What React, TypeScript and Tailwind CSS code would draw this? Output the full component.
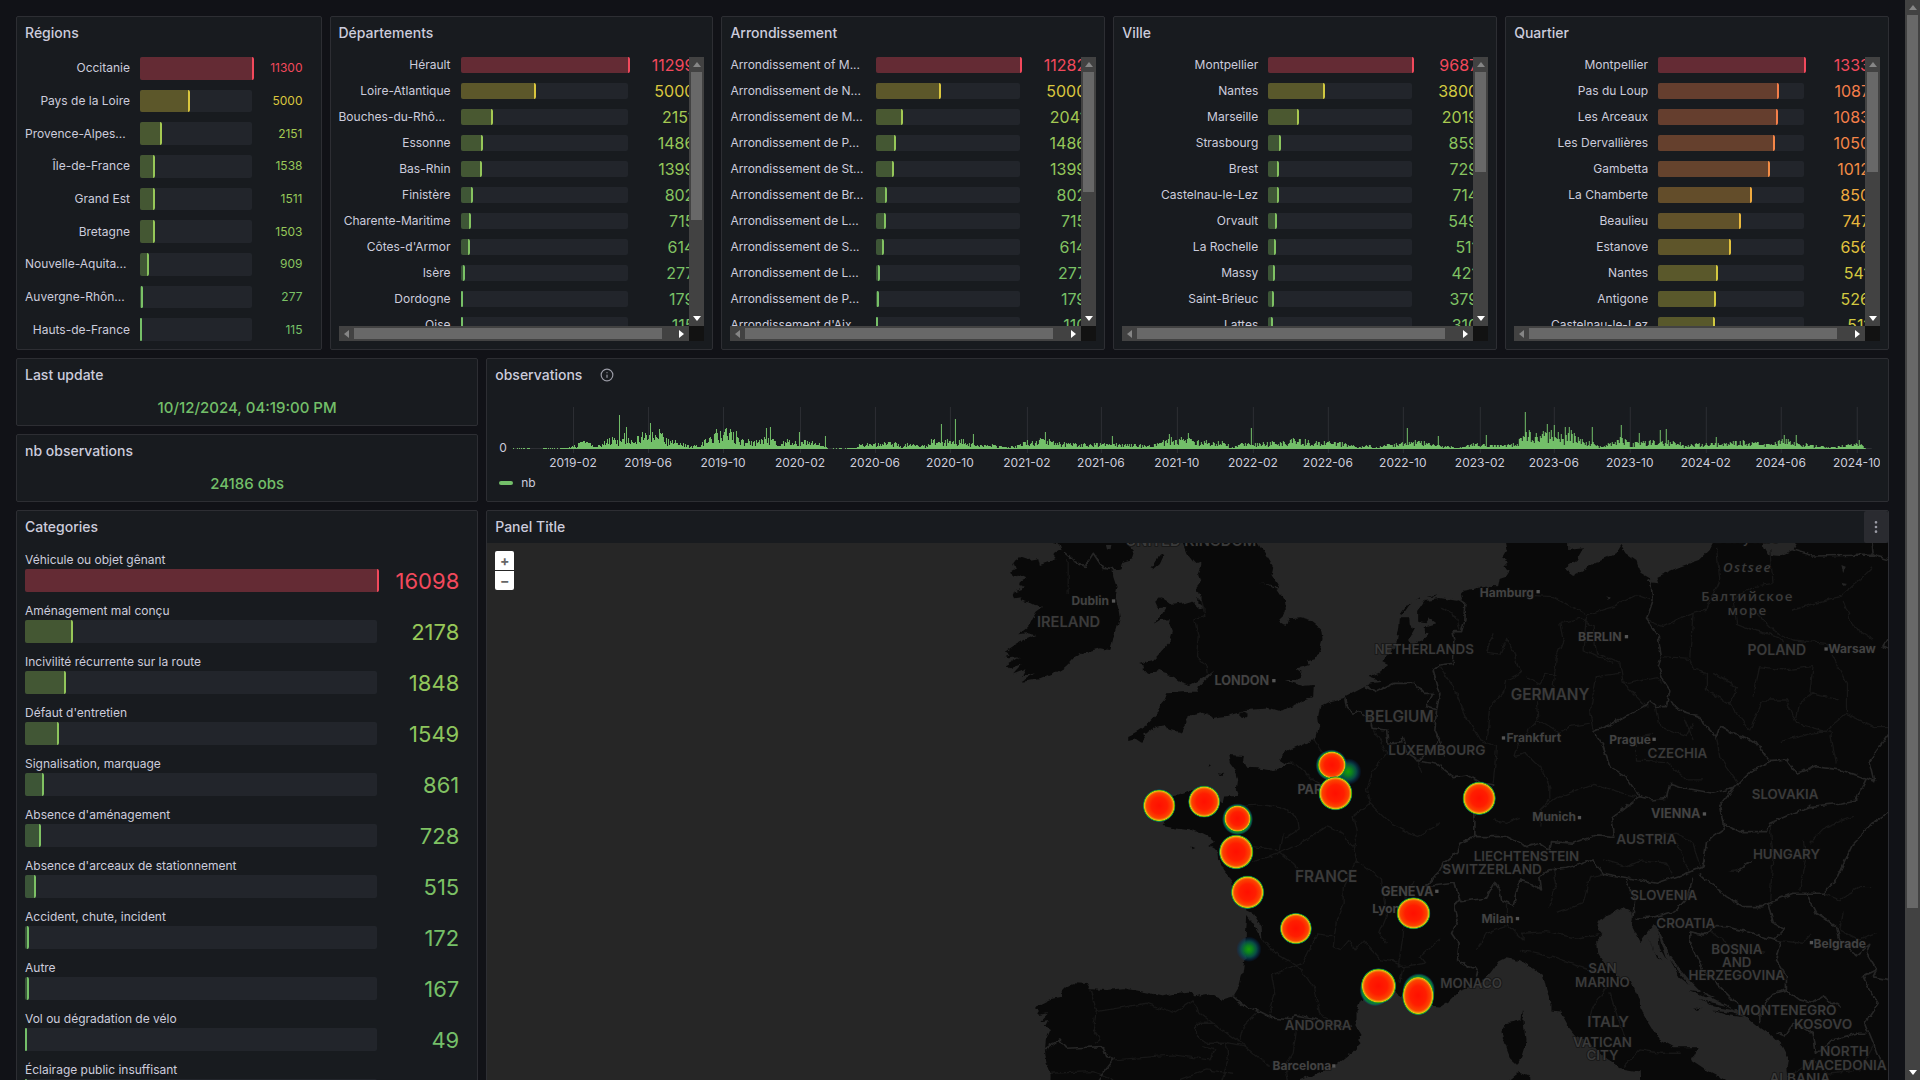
import { ReactNode } from "react";
import { EllipsisVertical, Info } from "lucide-react";

type Row = [label: string, value: number];
type RGB = [number, number, number];

const regions: Row[] = [
  ["Occitanie", 11300],
  ["Pays de la Loire", 5000],
  ["Provence-Alpes...", 2151],
  ["Île-de-France", 1538],
  ["Grand Est", 1511],
  ["Bretagne", 1503],
  ["Nouvelle-Aquita...", 909],
  ["Auvergne-Rhôn...", 277],
  ["Hauts-de-France", 115],
];

const departements: Row[] = [
  ["Hérault", 11299],
  ["Loire-Atlantique", 5000],
  ["Bouches-du-Rhô...", 2151],
  ["Essonne", 1486],
  ["Bas-Rhin", 1399],
  ["Finistère", 802],
  ["Charente-Maritime", 715],
  ["Côtes-d'Armor", 614],
  ["Isère", 277],
  ["Dordogne", 179],
  ["Oise", 115],
];

const arrondissements: Row[] = [
  ["Arrondissement of M...", 11282],
  ["Arrondissement de N...", 5000],
  ["Arrondissement de M...", 2041],
  ["Arrondissement de P...", 1486],
  ["Arrondissement de St...", 1399],
  ["Arrondissement de Br...", 802],
  ["Arrondissement de L...", 715],
  ["Arrondissement de S...", 614],
  ["Arrondissement de L...", 277],
  ["Arrondissement de P...", 179],
  ["Arrondissement d'Aix...", 110],
];

const villes: Row[] = [
  ["Montpellier", 9687],
  ["Nantes", 3800],
  ["Marseille", 2019],
  ["Strasbourg", 859],
  ["Brest", 729],
  ["Castelnau-le-Lez", 714],
  ["Orvault", 549],
  ["La Rochelle", 511],
  ["Massy", 421],
  ["Saint-Brieuc", 379],
  ["Lattes", 310],
];

const quartiers: Row[] = [
  ["Montpellier", 1333],
  ["Pas du Loup", 1087],
  ["Les Arceaux", 1083],
  ["Les Dervallières", 1050],
  ["Gambetta", 1012],
  ["La Chamberte", 850],
  ["Beaulieu", 747],
  ["Estanove", 656],
  ["Nantes", 541],
  ["Antigone", 526],
  ["Castelnau-le-Lez", 511],
];

const categories: Row[] = [
  ["Véhicule ou objet gênant", 16098],
  ["Aménagement mal conçu", 2178],
  ["Incivilité récurrente sur la route", 1848],
  ["Défaut d'entretien", 1549],
  ["Signalisation, marquage", 861],
  ["Absence d'aménagement", 728],
  ["Absence d'arceaux de stationnement", 515],
  ["Accident, chute, incident", 172],
  ["Autre", 167],
  ["Vol ou dégradation de vélo", 49],
  ["Éclairage public insuffisant", 20],
];

/* Green - yellow - red scale, interpolated with a uniform B-spline. */
const stops: RGB[] = [
  [115, 191, 105],
  [250, 222, 42],
  [242, 73, 92],
];
const panelRgb: RGB = [24, 27, 31];

function scale(t: number): RGB {
  const n = stops.length - 1;
  const i = Math.min(Math.floor(t * n), n - 1);
  const u = t * n - i;
  return [0, 1, 2].map((c) => {
    const b = stops[i][c];
    const d = stops[i + 1][c];
    const a = i > 0 ? stops[i - 1][c] : 2 * b - d;
    const e = i < n - 1 ? stops[i + 2][c] : 2 * d - b;
    const u2 = u * u;
    const u3 = u2 * u;
    return Math.round(
      ((1 - 3 * u + 3 * u2 - u3) * a + (4 - 6 * u2 + 3 * u3) * b + (1 + 3 * u + 3 * u2 - 3 * u3) * d + u3 * e) / 6,
    );
  }) as RGB;
}
const css = (c: RGB) => `rgb(${c.join(",")})`;
const fade = (c: RGB) => css(c.map((v, i) => Math.round(v * 0.35 + panelRgb[i] * 0.65)) as RGB);

function Panel({ title, extra, className = "", children }: { title: string; extra?: ReactNode; className?: string; children: ReactNode }) {
  return (
    <section className={`flex min-w-0 flex-col rounded-xs border border-[#2d2e33] bg-[#181b1f] ${className}`}>
      <header className="flex h-8 shrink-0 items-center gap-[18px] pl-2">
        <h2 className="pb-px text-[14px] font-medium leading-5">{title}</h2>
        {extra}
      </header>
      {children}
    </section>
  );
}

function Bar({ t, className = "" }: { t: number; className?: string }) {
  const color = scale(t);
  return (
    <div className={`flex min-w-0 rounded-xs bg-[#22252b] ${className}`}>
      <div
        className="shrink-0 rounded-xs border-r-2"
        style={{ width: `calc((100% + 2px) * ${t})`, backgroundColor: fade(color), borderColor: css(color) }}
      />
    </div>
  );
}

function Label({ text, className = "" }: { text: string; className?: string }) {
  const cut = text.endsWith("...");
  return <div className={`shrink-0 whitespace-nowrap text-[12px] leading-4 ${cut ? "text-left" : "text-right"} ${className}`}>{text}</div>;
}

const DIRS = { up: "M4 0 8 5H0Z", down: "M0 0H8L4 5Z", left: "M0 4 5 0V8Z", right: "M5 4 0 0V8Z" };
function Arrow({ dir, dim }: { dir: keyof typeof DIRS; dim?: boolean }) {
  const vertical = dir === "up" || dir === "down";
  return (
    <span className="flex size-[15px] shrink-0 items-center justify-center">
      <svg
        className={`${vertical ? "h-[5px] w-2" : "h-2 w-[5px]"} ${dim ? "fill-[#868686]" : "fill-white"}`}
        viewBox={vertical ? "0 0 8 5" : "0 0 5 8"}
      >
        <path d={DIRS[dir]} />
      </svg>
    </span>
  );
}

function VScroll({ thumb }: { thumb: string }) {
  return (
    <div className="flex w-[15px] shrink-0 flex-col items-center bg-[#424242]">
      <Arrow dir="up" dim />
      <div className="flex w-[11px] flex-1 flex-col">
        <div className={`bg-[#686868] ${thumb}`} />
      </div>
      <Arrow dir="down" />
    </div>
  );
}

function ScrollGauge({ rows, labelWidth, thumb }: { rows: Row[]; labelWidth: string; thumb: string }) {
  const max = rows[0][1];
  return (
    <div className="m-2 flex h-[284px] flex-col">
      <div className="flex min-h-0 flex-1">
        <div className="min-w-0 flex-1 overflow-hidden">
          <div className="-mr-[15px] flex flex-col gap-[10px] pr-[10px]">
            {rows.map(([label, value], i) => (
              <div key={i} className="flex h-4 shrink-0 items-stretch">
                <Label text={label} className={`mr-[10px] ${labelWidth}`} />
                <Bar t={value / max} className="flex-1" />
                <div className="w-[66px] shrink-0 text-right text-[16px] leading-4" style={{ color: css(scale(value / max)) }}>
                  {value}
                </div>
              </div>
            ))}
          </div>
        </div>
        <VScroll thumb={thumb} />
      </div>
      <div className="flex h-[15px] shrink-0">
        <div className="flex flex-1 items-center bg-[#424242]">
          <Arrow dir="left" dim />
          <div className="h-[11px] flex-1">
            <div className="h-full w-[96%] bg-[#686868]" />
          </div>
          <Arrow dir="right" />
        </div>
        <div className="w-[15px] bg-[#121212]" />
      </div>
    </div>
  );
}

function Stat({ title, value }: { title: string; value: string }) {
  return (
    <Panel title={title}>
      <p className="flex h-[34px] items-center justify-center text-[15px] font-medium text-[#73bf69]">{value}</p>
    </Panel>
  );
}

/* ---------- time series ---------- */

const ENVELOPE: [number, number][] = [
  [18, 0], [65, 1], [81, 4], [86, 10], [93, 7], [102, 3], [109, 8], [116, 12], [123, 11], [127, 20], [131, 11], [141, 15], [150, 18], [165, 19], [173, 10],
  [187, 7], [194, 3], [203, 4], [210, 10], [221, 18], [233, 20], [242, 14], [251, 9], [260, 10], [270, 16], [279, 10], [283, 5], [290, 10],
  [302, 8], [311, 9], [325, 6], [332, 1], [333, 0], [352, 1], [361, 1], [364, 5], [380, 6], [389, 7], [403, 7], [406, 1], [410, 6], [426, 5], [430, 3],
  [435, 10], [449, 10], [458, 9], [465, 12], [472, 7], [483, 4], [499, 5], [508, 2], [522, 4], [531, 10], [550, 11], [559, 9], [573, 6],
  [596, 6], [619, 6], [637, 5], [655, 4], [664, 8], [674, 11], [692, 14], [705, 9], [710, 11], [714, 6], [726, 9], [733, 5], [736, 2], [744, 6],
  [769, 7], [790, 9], [804, 12], [815, 8], [834, 8], [852, 6], [863, 2], [873, 5], [879, 1], [889, 4], [907, 8], [916, 9], [930, 9], [939, 4],
  [957, 3], [963, 1], [976, 6], [990, 5], [999, 4], [1022, 7], [1031, 20], [1042, 15], [1058, 20], [1068, 14], [1077, 19], [1086, 10],
  [1095, 8], [1107, 2], [1125, 14], [1137, 6], [1148, 9], [1169, 9], [1185, 7], [1189, 3], [1201, 6], [1224, 6], [1242, 9], [1261, 8],
  [1274, 5], [1288, 11], [1302, 8], [1320, 4], [1334, 2], [1348, 4], [1364, 7], [1370, 1], [1371, 0], [1377, 0],
];
const SPIKES = new Map<number, number>([
  [124, 34], [131, 22], [155, 26], [164, 20], [221, 20], [231, 21], [235, 20], [241, 18], [271, 21], [275, 22], [304, 17], [330, 13], [446, 25],
  [460, 30], [478, 15], [550, 17], [617, 13], [674, 15], [693, 16], [756, 21], [912, 21], [943, 13], [991, 14], [1030, 37], [1052, 25], [1059, 24],
  [1070, 22], [1074, 22], [1097, 22], [1126, 24], [1144, 16], [1165, 19], [1171, 20], [1221, 12], [1289, 14], [1301, 14], [1364, 9],
]);
const BASE = 58;
const rand = (n: number) => {
  const s = Math.sin(n * 127.1 + 11.7) * 43758.5453;
  return s - Math.floor(s);
};
function columns() {
  let d = "";
  for (let x = 18; x < 1371; x++) {
    const k = ENVELOPE.findIndex((p) => p[0] > x);
    const [x0, y0] = ENVELOPE[k - 1];
    const [x1, y1] = ENVELOPE[k];
    const level = y0 + ((y1 - y0) * (x - x0)) / (x1 - x0);
    const r = rand(x);
    const h = SPIKES.get(x) ?? (level < 1 ? (r > 0.55 ? 1 : 0) : Math.max(1, Math.round(level * (0.3 + 0.75 * r))));
    if (h) d += `M${x} ${BASE}v-${h}h1v${h}z`;
  }
  return d;
}
const SERIES = columns();
const TICKS: [number, string][] = [
  [78, "2019-02"], [153, "2019-06"], [228, "2019-10"], [305, "2020-02"], [380, "2020-06"], [455, "2020-10"], [532, "2021-02"], [606, "2021-06"],
  [682, "2021-10"], [758, "2022-02"], [833, "2022-06"], [908, "2022-10"], [985, "2023-02"], [1059, "2023-06"], [1135, "2023-10"], [1211, "2024-02"],
  [1286, "2024-06"], [1362, "2024-10"],
];

function Observations() {
  return (
    <div className="flex flex-1 flex-col px-2">
      <svg viewBox="0 0 1385 80" className="block w-full shrink-0" role="img" aria-label="observations over time">
        {TICKS.map(([x]) => (
          <path key={x} d={`M${x} 16h1v46h-1z`} fill="#2d2f34" />
        ))}
        <path d="M18 57h1359v1H18z" fill="#2d2f34" />
        <path d={SERIES} fill="#73bf69" />
        <g fill="#ccccdc" fontSize="12" fontFamily="Inter, sans-serif" textAnchor="middle">
          <text x="8" y="61">0</text>
          {TICKS.map(([x, label]) => (
            <text key={x} x={x} y="76">{label}</text>
          ))}
        </g>
      </svg>
      <div className="flex h-6 items-center gap-2 pl-1 text-[12px]">
        <span className="h-1 w-[14px] rounded-full bg-[#73bf69]" />
        nb
      </div>
    </div>
  );
}

/* ---------- map ---------- */

const IRELAND =
  "M270 -20L275 9 300 14 305 30 280 45 290 58 240 75 235 55 205 60 180 52 165 62 160 75 175 85 150 98 165 110 185 105 200 112 180 122 178 135 192 140 185 148 160 155 165 175 185 172 180 180 215 190 225 195 250 200 230 215 215 240 205 260 175 283 200 280 230 285 190 300 165 315 135 335 150 345 135 350 145 355 180 352 140 375 150 385 185 372 160 400 200 385 185 410 225 400 185 425 240 418 285 400 310 385 325 372 345 350 365 340 400 330 420 325 450 330 455 315 458 300 470 270 480 235 475 205 470 185 465 165 470 140 460 110 458 92 485 85 490 65 515 58 522 35 505 18 515 -20Z";
const BRITAIN =
  "M660 -20L668 9 680 40 700 65 710 75 725 70 722 85 715 105 722 125 710 140 712 155 725 165 725 180 705 178 730 200 735 212 718 202 695 182 670 190 640 194 618 178 600 172 586 185 595 205 620 200 605 225 580 252 600 240 630 238 628 250 636 270 630 290 634 300 615 320 595 345 580 360 560 365 538 372 555 378 548 390 562 405 580 395 600 390 612 400 640 408 660 425 690 435 720 420 742 408 765 390 740 418 716 440 716 455 690 455 622 460 615 478 600 495 598 515 580 535 560 555 535 572 518 582 505 588 505 600 525 595 545 608 555 595 550 580 565 575 590 560 620 555 625 568 655 575 668 578 672 562 680 550 678 540 700 525 730 518 750 525 760 535 780 530 800 528 835 518 850 510 895 508 930 505 965 515 985 505 1010 495 1030 480 1060 470 1062 435 1030 438 1010 432 975 420 1005 420 1020 410 1025 395 1010 385 1030 382 1050 375 1045 360 1065 355 1080 330 1088 300 1085 275 1070 255 1050 240 1020 232 990 235 985 250 978 256 955 242 970 228 978 210 975 180 955 150 925 135 895 130 925 133 960 145 935 105 940 80 915 40 895 9 880 -20Z";
const CONTINENT =
  "M1630 -20L1640 30 1628 50 1645 62 1630 78 1650 92 1640 108 1620 115 1615 142 1575 140 1510 152 1500 165 1505 180 1490 182 1440 174 1395 180 1375 210 1375 245 1400 250 1410 235 1430 250 1395 260 1395 278 1410 280 1385 300 1355 320 1345 300 1365 265 1350 255 1348 235 1320 235 1318 260 1312 300 1300 330 1280 350 1265 365 1285 375 1255 400 1225 410 1265 425 1222 432 1235 450 1215 440 1150 475 1110 485 1080 500 1075 530 1078 560 1070 590 1060 600 1010 620 970 640 960 660 975 670 1010 672 985 675 945 690 890 682 860 680 850 660 852 648 805 645 810 670 825 690 832 720 828 750 835 768 790 770 785 790 770 765 735 755 700 750 660 765 630 770 615 800 600 820 620 840 608 855 625 858 645 862 690 868 720 880 750 895 762 905 745 915 772 930 775 960 790 990 815 1020 830 1060 860 1110 880 1120 905 1160 908 1200 885 1160 862 1128 858 1180 855 1250 848 1300 838 1340 820 1370 790 1378 740 1362 700 1370 690 1355 650 1360 610 1370 560 1358 490 1345 440 1350 390 1348 380 1332 340 1330 320 1340 305 1355 310 1370 270 1378 235 1395 225 1408 240 1415 235 1425 265 1420 240 1445 265 1440 255 1460 270 1470 258 1500 255 1530 260 1570 272 1600 270 1840 990 1840 990 1640 1020 1620 1060 1605 1130 1575 1180 1535 1202 1510 1195 1500 1205 1485 1190 1460 1190 1410 1200 1385 1230 1375 1300 1355 1330 1372 1390 1395 1440 1400 1470 1380 1500 1350 1560 1330 1590 1300 1615 1265 1640 1252 1680 1260 1720 1285 1750 1305 1760 1350 1775 1390 1775 1412 1800 1415 1825 1460 1850 1490 1890 1510 1940 1560 1980 1585 2040 1595 2050 1840 2320 1840 2300 1620 2240 1590 2195 1560 2205 1540 2220 1522 2140 1522 2100 1500 2050 1420 2030 1360 2010 1320 1980 1320 1940 1280 1915 1240 1912 1205 1930 1185 1910 1160 1915 1140 1960 1120 1990 1102 2010 1110 2020 1130 2015 1155 2040 1208 2060 1180 2080 1155 2095 1170 2115 1210 2130 1250 2160 1285 2190 1320 2230 1360 2300 1395 2340 1415 2390 1455 2440 1490 2470 1520 2485 1550 2480 1585 2485 1640 2490 1840 2900 1840 2900 -20Z";
const ISLANDS =
  "M575 85L585 65 605 42 610 50 600 72 582 88ZM835 520L850 512 867 520 850 535ZM745 672L753 676 747 680ZM775 700L792 702 788 708ZM695 920L706 924 698 928ZM1690 1407L1695 1450 1700 1500 1685 1550 1672 1575 1650 1555 1640 1530 1630 1500 1625 1475 1640 1450 1685 1440ZM1645 1840L1645 1620 1675 1597 1705 1610 1715 1840ZM1320 222L1345 190 1355 185 1328 225ZM1365 180L1385 172 1383 176ZM1400 170L1435 163 1420 170Z" +
  "M2066 1190L2080 1230 2105 1265 2088 1250ZM2095 1180L2110 1230 2120 1260 2100 1225ZM2130 1262L2165 1305 2190 1335 2160 1312ZM2190 1350L2240 1358 2270 1372 2230 1368ZM2220 1380L2300 1398 2330 1412 2260 1400ZM2200 1402L2225 1405 2215 1410ZM2260 1412L2320 1420 2350 1432 2300 1425Z";
const WATER =
  "M1825 -20L1825 30 1870 25 1850 60 1812 85 1840 105 1880 85 1920 60 1970 40 1985 15 2000 40 2030 60 2042 98 2070 115 2060 125 2095 130 2090 110 2160 80 2220 60 2250 30 2275 -20ZM2405 -20L2410 20 2425 45 2460 48 2500 30 2530 -20ZM435 12L455 12 452 28 438 24ZM1575 -20L1640 -20 1632 15ZM1940 165L1955 175 1948 182ZM2303 995L2330 992 2375 960 2372 968 2335 995ZM2645 75L2658 80 2650 100ZM2645 128L2665 132 2655 138Z";
const COUNTRIES =
  "M310 35L345 65 375 80 400 40 430 85 470 90M1155 475L1160 505 1180 520 1200 515 1235 540 1240 565 1280 570 1285 610 1325 605 1330 590 1345 640 1375 660 1430 670 1480 710 1520 705 1560 728 1605 735 1570 770 1545 800 1545 890 1500 910 1490 940 1450 970 1435 1000 1400 1040 1485 1030 1500 1080 1485 1100 1495 1140 1475 1180 1495 1210 1490 1260 1520 1280 1555 1285 1550 1310" +
  "M1215 440L1250 455 1300 430 1360 430 1390 460 1420 460 1400 500 1430 510 1440 460 1420 390 1440 375 1480 370 1485 300 1480 275 1505 275 1515 240 1518 190 1500 178M1430 510L1425 570 1440 600 1415 625 1375 660M1440 600L1455 650" +
  "M2070 110L2080 180 2060 240 2095 290 2105 350 2095 380 2110 420 2130 450 2120 500 2090 500 2070 485 2050 500 1960 550 1900 575 1930 620 1950 680 2000 710 2040 770 2080 780 2120 775 2130 730 2180 745 2260 760 2320 745 2380 690 2430 665 2400 620 2370 600 2340 590 2280 560 2270 590 2230 550 2220 530 2160 510 2130 485" +
  "M2430 665L2480 660 2510 700 2570 680 2640 690 2720 715 2745 725 2730 660 2790 580M2720 715L2690 780 2640 790 2550 800 2500 820 2430 850 2420 875 2340 875 2290 850 2280 800 2320 745" +
  "M2040 770L2000 800 1955 835 1965 890 1910 885 1840 910 1775 905 1770 930 1740 910 1700 920 1640 890 1600 890 1545 890M1740 1010L1770 990 1820 985 1900 960 1930 1000 2010 1015 2090 1030 2180 1000 2230 980 2240 910 2260 890 2290 870 2290 850M1485 1030L1500 1085 1580 1075 1605 1030 1620 1050 1625 1080 1660 1095 1680 1020 1710 1030 1745 1050 1740 1010" +
  "M2220 1000L2300 1070 2350 1100 2410 1100 2435 1085 2500 1060 2590 1060 2630 1020 2680 910 2750 840 2800 810M2200 1010L2185 1070 2150 1110 2090 1130 2030 1135M2000 1020L2025 1070 2020 1130" +
  "M2425 1090L2440 1150 2475 1165 2440 1200 2380 1180 2300 1160 2270 1160 2230 1185 2190 1175 2190 1210 2230 1290 2310 1370 2335 1400M2440 1200L2465 1205 2450 1260 2480 1310 2480 1350 2440 1360 2400 1410 2400 1450M2500 1060L2540 1060 2570 1120 2630 1160 2640 1200 2690 1245 2730 1210 2720 1240 2750 1290 2740 1310 2790 1320M2750 1290L2710 1310 2730 1350 2755 1390 2715 1450 2740 1510 2760 1560M2480 1350L2520 1380 2560 1390 2590 1370 2640 1400M2500 1450L2475 1490 2450 1480M2500 1450L2560 1480 2570 1540 2620 1500 2690 1480 2720 1480" +
  "M820 1370L860 1405 900 1415 940 1435 1000 1440 1005 1425 1060 1435 1100 1450 1180 1462M255 1530L300 1500 320 1525 430 1520 440 1550 465 1555 410 1625M2500 20L2500 30 2560 48 2740 45 2735 -20M2740 45L2790 60M2790 290L2770 320 2790 330";
const PROVINCES =
  "M725 180L735 230 705 240 715 290 710 350 740 380 742 400M325 60L325 165M390 1350L410 1410 400 1470 420 1500 405 1510M410 1415L500 1400 560 1390 600 1405 640 1420 700 1380 720 1420 760 1450 710 1450 710 1490 740 1510 800 1510 850 1520M760 1450L830 1500 930 1580M465 1560L640 1545 750 1560 765 1530 730 1520M800 1510L805 1560 780 1640M840 1500L850 1460 890 1420M270 1600L400 1595 460 1620M660 1620L740 1590 820 1600M1010 1470L1000 1540 975 1580 985 1640" +
  "M1060 600L1090 640M1010 672L1060 720 1080 730M835 800L900 795 960 800 1010 830 1015 870 975 895M960 940L1040 900 1100 860 1150 880 1180 920 1190 960 1240 1000 1265 1020M880 920L950 930 1000 970 1015 985M880 965L930 950 960 940 970 880M1240 565L1280 640 1240 690 1220 750 1230 790 1180 830 1190 880 1180 930M1230 790L1290 850 1370 890 1440 850M1370 660L1390 700M1190 960L1150 1040 1150 1090 1130 1140 1120 1220 1140 1230 1165 1200 1185 1230 1210 1200 1265 1260 1300 1265 1330 1280 1320 1330M1265 1020L1280 1130 1260 1180 1280 1210M1360 1020L1340 1060 1330 1190 1315 1280M1115 1190L1070 1185 1030 1270 935 1305 945 1360 930 1420M1015 1280L1060 1340 1080 1420 1130 1450M910 1200L940 1235 1015 1280M1330 1280L1395 1270 1380 1250 1440 1200" +
  "M1440 200L1490 230 1500 270M1440 380L1480 440 1520 530 1560 600 1610 620 1600 730M1600 280L1580 340 1620 345 1640 295 1660 330 1680 400 1640 420 1630 460 1590 500 1580 600M1700 410L1740 430 1760 400 1790 410M1730 490L1735 540 1680 600 1665 650 1700 640 1740 680 1770 740 1770 780 1740 810M1735 540L1800 580 1830 560 1890 550M1900 570L1890 520 1910 410 1980 400M1780 440L1790 350 1810 300 1800 250 1860 235 1900 260 1910 340 1980 370 1990 430 2060 500M1690 165L1780 170 1880 225 1960 200 2030 165 2070 180M1880 230L1870 330 1960 370M1990 430L2090 410 2110 430M2105 350L2190 355 2200 390 2240 400 2240 450 2310 490 2330 440 2260 400M2060 240L2110 260 2200 220 2190 350M2270 20L2280 120 2240 210 2200 220M2310 490L2370 570 2410 480 2480 480 2510 550 2620 580M2380 470L2400 380 2470 390 2560 380M2430 30L2440 130 2380 140 2320 180 2330 250 2380 270 2460 290 2470 310M2380 210L2440 270 2500 300 2600 310 2640 390 2660 430 2660 520 2600 570 2460 605M2500 210L2600 180 2640 170 2700 120 2740 80M2650 180L2680 260 2740 300M2560 380L2550 460 2640 480M2510 540L2520 490 2560 460M2660 520L2740 560 2790 560M2610 570L2630 670M2090 500L2100 560 2180 590 2200 550M2170 530L2200 600M2080 580L2030 590 2030 660 2120 665 2180 720 2230 720M2270 590L2280 650 2340 740M1740 810L1800 770 1900 730 1990 760 2030 770" +
  "M1740 860L1745 810M1600 840L1640 850 1680 835M1930 960L2000 980 2050 960 2120 970 2140 1000M2150 910L2190 1000M2030 890L2150 880 2200 910 2220 980M1770 1100L1790 1030 1780 990M1790 1120L1870 1090 1890 1010 1940 1000M1640 1090L1640 1150 1690 1200 1690 1180 1760 1175 1850 1195 1930 1180M1550 1230L1580 1180 1640 1160M1680 1230L1770 1250 1860 1280 1920 1300M1940 1340L1900 1400 1890 1450M1950 1360L1980 1450 2000 1500M1990 1580L2040 1530 2100 1540 2160 1540M2430 850L2440 950 2430 1080M2530 900L2540 960 2520 1050M2550 910L2600 860 2680 830M2590 1060L2640 1080 2700 1040 2740 1040M2650 1120L2640 1170 2700 1200 2750 1180M2440 1200L2530 1210 2560 1180M2250 1170L2330 1230 2420 1240M2500 1600L2560 1560 2600 1600 2700 1590 2740 1520";

type MapLabel = [x: number, y: number, size: number, text: string, kind?: "sea" | "city"];
const LABELS: MapLabel[] = [
  [693, 18, 44, "UNITED KINGDOM"], [326, 261, 44, "IRELAND"], [391, 196, 36, "Dublin", "city"], [846, 435, 38, "LONDON", "city"],
  [1393, 342, 40, "NETHERLANDS"], [1318, 546, 46, "BELGIUM"], [1431, 645, 41, "LUXEMBOURG"], [1641, 170, 36, "Hamburg", "city"],
  [1920, 303, 37, "BERLIN", "city"], [1771, 481, 46, "GERMANY"], [1722, 607, 36, "Frankfurt", "city"], [2011, 611, 36, "Prague", "city"],
  [2153, 655, 40, "CZECHIA"], [2451, 345, 42, "POLAND"], [2677, 340, 36, "Warsaw", "city"], [2363, 97, 40, "Ostsee", "sea"],
  [2363, 183, 40, "Балтийское", "sea"], [2363, 225, 40, "море", "sea"], [2363, 10, 36, "Bałtyckie", "sea"], [2476, 776, 40, "SLOVAKIA"],
  [1068, 762, 38, "PARIS", "city"], [1099, 1026, 46, "FRANCE"], [1342, 1068, 38, "GENEVA", "city"], [1279, 1118, 36, "Lyon", "city"],
  [1783, 842, 36, "Munich", "city"], [2148, 834, 38, "VIENNA", "city"], [2060, 911, 41, "AUSTRIA"], [1700, 962, 40, "LIECHTENSTEIN"],
  [1597, 1002, 41, "SWITZERLAND"], [2480, 958, 40, "HUNGARY"], [2112, 1079, 40, "SLOVENIA"], [1613, 1149, 36, "Milan", "city"],
  [2178, 1164, 40, "CROATIA"], [2331, 1242, 40, "BOSNIA"], [2331, 1281, 40, "AND"], [2331, 1320, 40, "HERZEGOVINA"],
  [2640, 1223, 36, "Belgrade", "city"], [1534, 1343, 40, "MONACO"], [1928, 1300, 40, "SAN"], [1928, 1340, 40, "MARINO"],
  [1945, 1461, 45, "ITALY"], [1928, 1520, 40, "VATICAN"], [1928, 1559, 40, "CITY"], [2482, 1424, 41, "MONTENEGRO"],
  [2590, 1466, 41, "KOSOVO"], [2654, 1549, 41, "NORTH"], [2654, 1589, 41, "MACEDONIA"], [2520, 1628, 41, "ALBANIA"],
  [1075, 1471, 40, "ANDORRA"], [1026, 1590, 36, "Barcelona", "city"],
];
const CITY_DOTS: [number, number][] = [
  [461, 183], [942, 422], [1735, 155], [2000, 290], [1631, 594], [2083, 598], [2599, 327], [1859, 833], [2234, 822], [1673, 1136], [2555, 1208],
  [1431, 1054], [1122, 1578],
];
const HEAT: [number, number, number, number][] = [
  [598, 797, 49, 49], [733, 785, 48, 48], [833, 836, 41, 41], [829, 936, 52, 52], [863, 1057, 50, 50], [1008, 1166, 48, 47], [1361, 1120, 51, 48],
  [1256, 1338, 53, 53], [1375, 1367, 48, 59], [1116, 675, 43, 42], [1127, 760, 51, 51], [1558, 775, 50, 50],
];
const HALO: [number, number, number, number][] = [
  [833, 838, 46, 47], [1115, 676, 47, 47], [1377, 1350, 48, 49], [1246, 1350, 46, 48], [1165, 695, 40, 40],
];

function HeatMap() {
  return (
    <svg viewBox="-1419 9 4203 1860" preserveAspectRatio="xMinYMin slice" className="block min-h-0 w-full flex-1 basis-0 bg-[#262626]" role="img" aria-label="Heat map of observations">
      <defs>
        <filter id="coast" filterUnits="userSpaceOnUse" x="0" y="-20" width="2900" height="1900" colorInterpolationFilters="sRGB">
          <feTurbulence type="fractalNoise" baseFrequency="0.04" numOctaves="3" seed="4" result="noise" />
          <feDisplacementMap in="SourceGraphic" in2="noise" scale="16" xChannelSelector="R" yChannelSelector="G" />
        </filter>
        <radialGradient id="hot">
          <stop offset="0" stopColor="#ff1000" />
          <stop offset="0.5" stopColor="#ff1e00" />
          <stop offset="0.78" stopColor="#fb4400" />
          <stop offset="0.86" stopColor="#f08a10" />
          <stop offset="0.91" stopColor="#dccb10" />
          <stop offset="0.94" stopColor="#4fa800" />
          <stop offset="0.98" stopColor="#00785a" />
          <stop offset="1" stopColor="#005080" stopOpacity="0.3" />
        </radialGradient>
        <radialGradient id="halo">
          <stop offset="0.5" stopColor="#109010" />
          <stop offset="0.88" stopColor="#0a7a38" />
          <stop offset="1" stopColor="#0a4a80" stopOpacity="0.2" />
        </radialGradient>
        <radialGradient id="cool">
          <stop offset="0" stopColor="#1a9c08" />
          <stop offset="0.3" stopColor="#0c8020" />
          <stop offset="0.6" stopColor="#086050" stopOpacity="0.8" />
          <stop offset="1" stopColor="#003a90" stopOpacity="0" />
        </radialGradient>
      </defs>
      <g filter="url(#coast)" strokeLinejoin="round">
        <path d={IRELAND + BRITAIN + CONTINENT + ISLANDS} fill="#090909" />
        <path d={WATER} fill="#262626" />
        <path d={PROVINCES} fill="none" stroke="#171717" strokeWidth="4" />
        <path d={COUNTRIES} fill="none" stroke="#262626" strokeWidth="5" />
      </g>
      <g fill="#3b3b3b" stroke="#0e0e0e" strokeOpacity="0.7" strokeWidth="5" paintOrder="stroke" textAnchor="middle">
        {LABELS.map(([x, y, size, text, kind]) => (
          <text
            key={text}
            x={x}
            y={y}
            fontSize={size}
            fontWeight={kind === "city" ? 700 : 600}
            fontStyle={text === "Ostsee" ? "italic" : "normal"}
            fontFamily={kind === "sea" ? "'Open Sans', sans-serif" : "Inter, sans-serif"}
            letterSpacing={kind === "sea" ? 4 : 0}
            fill={kind === "city" ? "#424242" : "#3a3a3a"}
          >
            {text}
          </text>
        ))}
      </g>
      {CITY_DOTS.map(([x, y]) => (
        <rect key={x} x={x - 5} y={y - 5} width="10" height="10" fill="#555" />
      ))}
      {HALO.map(([x, y, rx, ry], i) => (
        <ellipse key={i} cx={x} cy={y} rx={rx} ry={ry} fill={i === 4 ? "url(#cool)" : "url(#halo)"} />
      ))}
      {HEAT.map(([x, y, rx, ry]) => (
        <ellipse key={x} cx={x} cy={y} rx={rx} ry={ry} fill="url(#hot)" />
      ))}
      <circle cx="867" cy="1228" r="38" fill="url(#cool)" />
    </svg>
  );
}

const zoomButton = "flex h-[19px] w-[19px] items-center justify-center bg-white text-[14px] font-bold leading-none text-[#666]";

export default function App() {
  return (
    <div className="flex h-screen overflow-hidden bg-[#111217] font-[Inter,sans-serif] text-[#ccccdc] [font-optical-sizing:none]">
      <main className="flex min-w-0 flex-1 flex-col gap-2 p-4">
        <div className="grid shrink-0 grid-cols-24 gap-2">
          <Panel title="Régions" className="col-span-4">
            <div className="m-2 flex h-[284px] flex-col gap-[10px]">
              {regions.map(([label, value]) => (
                <div key={label} className="flex flex-1 items-center">
                  <Label text={label} className="mr-[10px] w-[105px]" />
                  <Bar t={value / 11300} className="flex-1 self-stretch" />
                  <div className="w-[61px] shrink-0 pr-[10px] text-right text-[12px]" style={{ color: css(scale(value / 11300)) }}>
                    {value}
                  </div>
                </div>
              ))}
            </div>
          </Panel>
          <Panel title="Départements" className="col-span-5">
            <ScrollGauge rows={departements} labelWidth="w-28" thumb="h-[62%]" />
          </Panel>
          <Panel title="Arrondissement" className="col-span-5">
            <ScrollGauge rows={arrondissements} labelWidth="w-[136px]" thumb="h-1/2" />
          </Panel>
          <Panel title="Ville" className="col-span-5">
            <ScrollGauge rows={villes} labelWidth="w-[136px]" thumb="h-[42%]" />
          </Panel>
          <Panel title="Quartier" className="col-span-5">
            <ScrollGauge rows={quartiers} labelWidth="w-[134px]" thumb="h-[42%]" />
          </Panel>
        </div>
        <div className="grid shrink-0 grid-cols-24 gap-2">
          <div className="col-span-6 flex flex-col gap-2">
            <Stat title="Last update" value="10/12/2024, 04:19:00 PM" />
            <Stat title="nb observations" value="24186 obs" />
          </div>
          <Panel
            title="observations"
            className="col-span-18"
            extra={
              <button type="button" aria-label="Panel description" className="text-[#9a9ba5]">
                <Info className="size-[14px]" />
              </button>
            }
          >
            <Observations />
          </Panel>
        </div>
        <div className="grid shrink-0 grid-cols-24 gap-2">
          <Panel title="Categories" className="col-span-6">
            <div className="flex flex-col gap-[10px] p-2">
              {categories.map(([label, value]) => (
                <div key={label}>
                  <div className="h-[18px] text-[12px] leading-[18px]">{label}</div>
                  <div className="flex h-[23px] items-center">
                    <Bar t={value / 16098} className="flex-1 self-stretch" />
                    <div className="w-[92px] shrink-0 pr-[10px] text-right text-[22px] leading-none" style={{ color: css(scale(value / 16098)) }}>
                      {value}
                    </div>
                  </div>
                </div>
              ))}
            </div>
          </Panel>
          <Panel
            title="Panel Title"
            className="relative col-span-18"
            extra={
              <button type="button" aria-label="Panel menu" className="ml-auto flex h-8 w-6 items-center justify-center rounded-xs bg-[#2a2b30] text-[#9a9ba5]">
                <EllipsisVertical className="size-4" />
              </button>
            }
          >
            <HeatMap />
            <div className="absolute left-2 top-10 flex flex-col gap-px overflow-hidden rounded-xs">
              <button type="button" aria-label="Zoom in" className={zoomButton}>+</button>
              <button type="button" aria-label="Zoom out" className={zoomButton}>−</button>
            </div>
          </Panel>
        </div>
      </main>
      <VScroll thumb="h-[85%]" />
    </div>
  );
}
